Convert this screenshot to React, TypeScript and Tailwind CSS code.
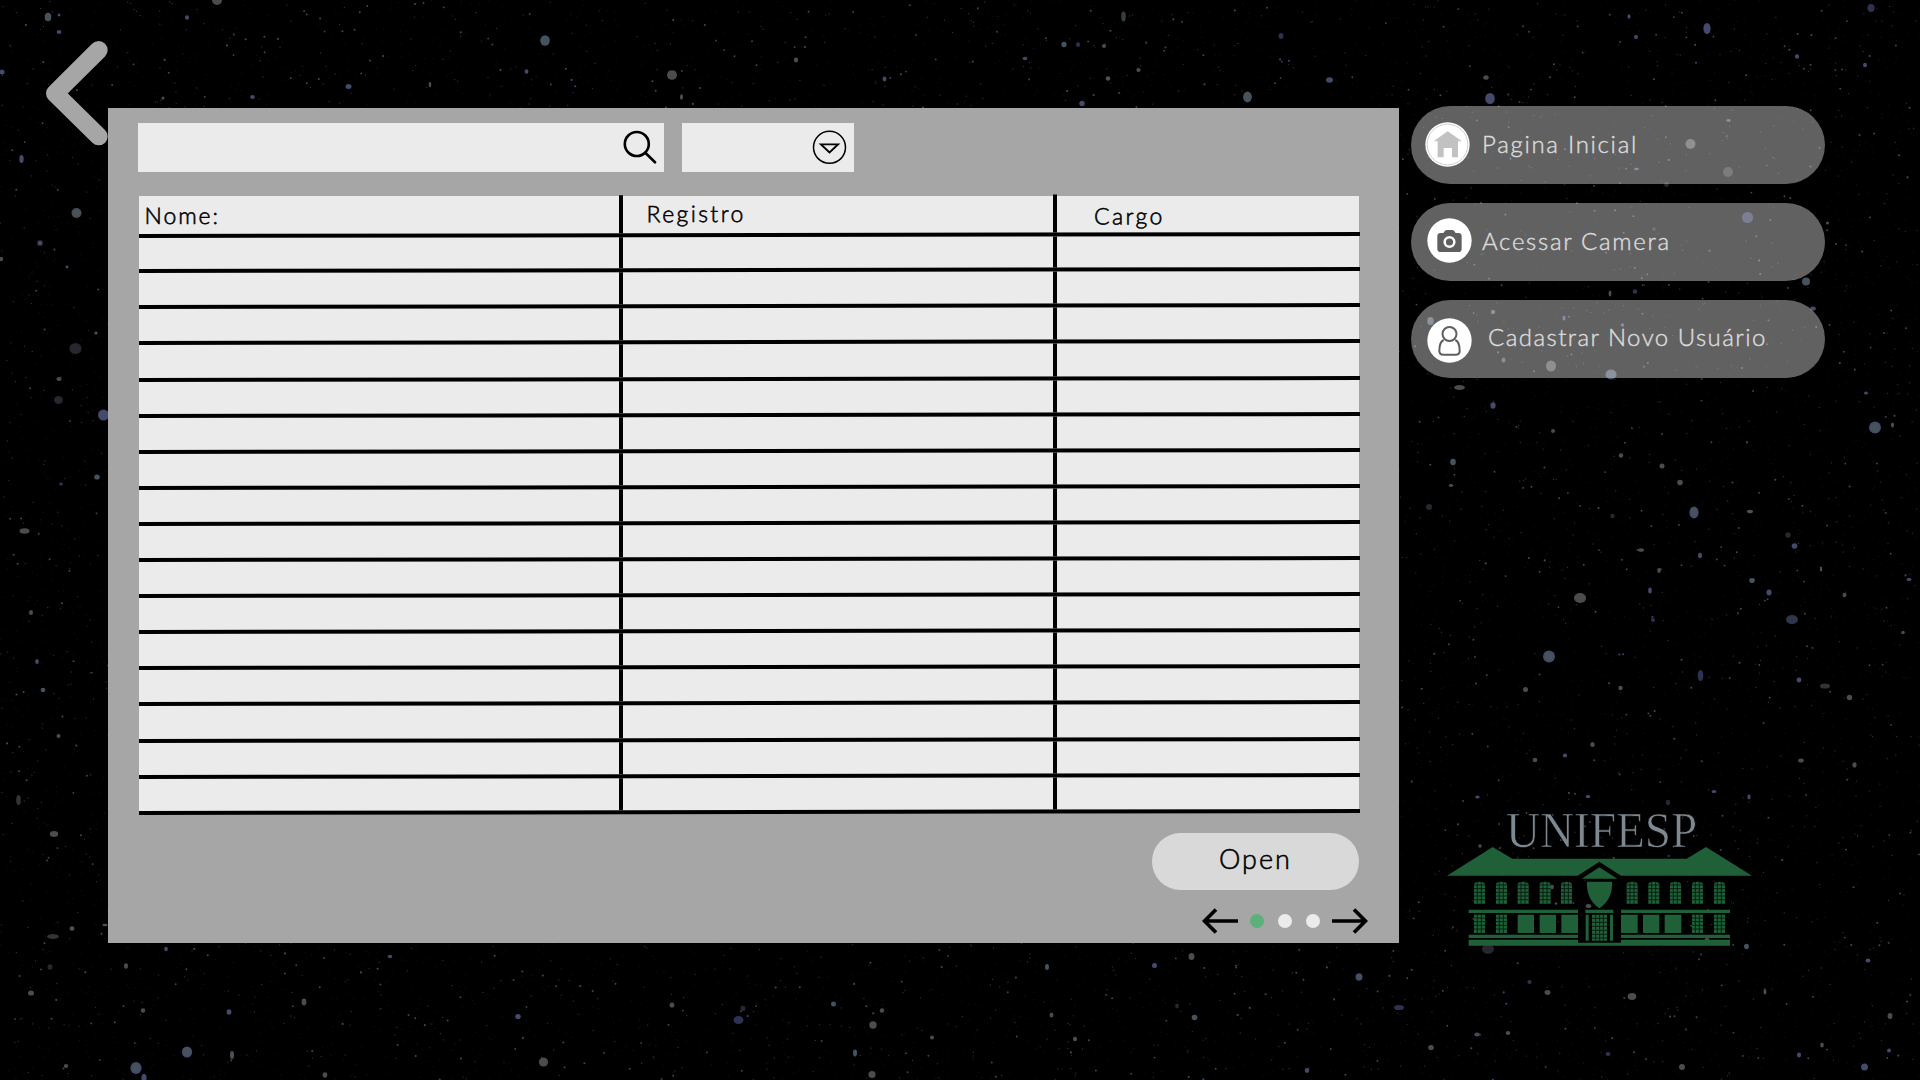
import type { ReactNode } from 'react';

type Star = [number, number, number, number, string];

const W = '#4c4b4d';
const B = '#434a6c';
const T = '#46525c';
const D = '#26272f';
const N = '#2d3152';

// x, y, horizontal radius, vertical radius, colour
const STARS: Star[] = [
  [48, 17, 3.3, 4.3, T], [59, 32, 2.3, 2.1, B], [59, 15, 1.4, 1.4, B], [187, 17.5, 2, 2.3, B], [217, 0, 5, 5, W],
  [2, 72, 2.5, 2.5, B], [252.5, 97, 2.3, 2.1, B], [348.5, 86.5, 3, 2.5, B], [430, 84.5, 1.3, 2.8, W], [21.5, 159, 2.2, 4, B],
  [76.5, 213, 5, 5, W], [76.5, 213, 3.4, 3.4, T], [40, 243, 3.1, 3.1, D], [40, 243, 2, 2, T], [1, 259, 2.2, 2.2, W], [163, 98, 1.5, 1.5, W],
  [1459.5, 387.5, 5.3, 2.6, W], [1493, 405.5, 2.6, 3.2, B], [1553, 431, 2, 2, W], [1453, 462, 2.8, 3.2, T], [1451, 485.5, 2.2, 1.4, W],
  [1429, 507, 3, 3, D], [1621, 455.5, 2.2, 2.2, W], [1662, 466, 2.5, 2.5, W], [1680, 482.5, 2.8, 2.8, W], [1694, 512.5, 4.6, 6, B],
  [1694, 512.5, 3.2, 4.4, T], [1875, 427.5, 6, 6, B], [1875, 427.5, 4.3, 4.3, T], [1892.5, 425, 1.6, 2.5, W], [1866, 393, 2, 1.6, B],
  [1750, 511.5, 3, 1.8, T], [1788, 535, 2.8, 2.8, D], [1794.5, 546, 2.8, 2.8, B], [1700, 555.5, 2, 2.8, B], [1752, 580.5, 2.8, 2.4, T],
  [1769, 592.5, 2.5, 3, B], [1792, 619.5, 6, 4.5, '#2c3849'], [1580, 598, 6, 5, W], [1549, 656.5, 6, 6, B], [1549, 656.5, 4.3, 4.3, T],
  [1641, 550, 3, 1.8, W], [1659, 570.5, 1.8, 2.4, W], [1650, 590.5, 1.8, 3, B], [1700.5, 675.5, 2.8, 5.6, N], [1825, 686, 5, 2.6, '#2c3438'],
  [1849.5, 697.5, 2.7, 2.7, W], [1799, 680, 2.4, 2.4, B], [1525.5, 689.5, 2.5, 2.5, W], [1620.5, 688, 2.2, 2.2, W], [1592.5, 744.5, 2.2, 2.6, W],
  [1535, 760, 2.3, 2.3, W], [1565, 755.5, 2.1, 2.1, B], [1801, 760.5, 2.8, 2.1, W], [1854.5, 765, 2.1, 2.7, W], [1844.5, 595, 2, 2.3, W],
  [1653, 620, 2, 2, N], [1612.5, 516, 2.2, 2.2, D], [1909, 579.5, 2.6, 1.4, B], [1903, 632.5, 1.8, 1.8, W], [1821, 569, 1.2, 2.8, W],
  [136, 1068, 5.6, 6, B], [136, 1068, 4, 4.6, T], [187, 1052, 5.2, 5.6, B], [187, 1052, 3.8, 4.2, T], [144, 1078, 2.6, 4, B],
  [232, 1055, 2, 4, T], [229, 1012, 2.4, 2.8, B], [304, 1002, 2.4, 3.4, W], [31, 993, 3, 2.6, W], [126, 966, 2, 2.8, W],
  [143, 1010.5, 2.2, 2.2, W], [66, 1066, 2.2, 2, W], [50, 967, 2.5, 2.8, D], [166, 949, 1.8, 2.2, B], [325, 1075, 2.3, 2.7, W],
  [518, 1016.5, 2.7, 2.6, B], [543.5, 1062, 4.6, 4.6, W], [672, 1005, 2.4, 2.6, W], [738.5, 1020, 5, 4, N], [743, 1008.5, 2.5, 2.8, D],
  [833.5, 1004, 2.5, 2.5, T], [873, 1025, 3.7, 3.7, W], [855, 1053, 2, 3.4, T], [872, 1074.5, 3.6, 3.6, W], [882, 1010.5, 2.2, 2.2, W],
  [932, 1037.5, 2, 2, W], [390, 956.5, 2.2, 1.7, B], [1047, 967, 2, 3, T], [1191.5, 956.5, 3, 3.6, W], [1154.5, 965.5, 2.5, 2.5, B],
  [1359, 977, 3.5, 3.8, B], [1359, 977, 2.2, 2.6, T], [1051.5, 1015, 2, 2.6, W], [1194.5, 1017.5, 2.8, 2.8, T], [1177, 1006, 1.8, 2.4, D],
  [1399, 1007.5, 5, 2.6, N], [1307, 1070.5, 2.2, 2.4, B], [1431, 1047.5, 2.8, 2.6, W], [1477, 1034.5, 2.7, 2, B], [1508, 1033, 2.3, 2, W],
  [1488, 949, 6, 5, D], [1547.5, 992.5, 2.9, 2.4, W], [1632, 996.5, 4.3, 3.4, W], [1529.5, 982, 2.1, 2.1, N], [1682, 1067, 3, 3, W],
  [1608, 1054, 2.5, 2.1, N], [1746.5, 946.5, 2.4, 2.8, T], [1868, 960.5, 2.4, 2, B], [1890, 1016, 2.4, 3, W], [1822, 1045, 1.8, 2.6, W],
  [1799, 1055, 2.1, 2.4, B], [1864.5, 1067, 3.5, 3.5, B], [1889, 1050.5, 2, 2, B], [1765, 992, 1.4, 2.4, T], [1075, 1039, 2, 2.3, T],
  [75.5, 348.5, 6, 5.6, D], [58.5, 400, 4.5, 4, D], [59, 379, 2.6, 2, W], [103.5, 415, 5.5, 5.5, B], [97, 477, 2.8, 2.6, T],
  [24.5, 531, 5, 2.8, W], [61, 484, 2, 1.6, N], [31, 612.5, 2, 2.6, W], [37, 661.5, 1.8, 2.6, B], [43, 690, 2.3, 2.2, T],
  [58.5, 736, 2, 2, W], [18.5, 800, 2.3, 5, '#343434'], [54, 834, 4.2, 3, W], [72, 928.5, 2.4, 2.2, T], [53, 936.5, 5.8, 2.6, '#343434'],
  [105, 925, 2.6, 1.3, W], [67, 267, 1.4, 1.4, B], [96, 333, 1.6, 1.5, T],
  [545, 40.5, 4.8, 5.2, T], [672, 75, 5, 4.8, W], [1123.5, 16.5, 2.3, 5, '#353f42'], [1707, 28.5, 3.6, 5.6, B], [1871, 8, 3.6, 4, N],
  [1247.5, 97, 4.4, 5.4, T], [1490, 98.5, 4.8, 5.6, B], [1281, 36, 2.4, 3, N], [1064, 44.5, 2.6, 2.8, T], [1078, 44.5, 2, 2.6, N],
  [1104, 46, 2, 2.1, W], [1108, 78.5, 2.3, 2.3, T], [1138.5, 70, 2.2, 2, W], [1082, 103.5, 2.7, 2.8, B], [1329.5, 80, 3.4, 2.7, B],
  [1486, 77.5, 2.7, 2.2, W], [1797, 56.5, 2.1, 2.3, B], [1865, 65, 2, 2.3, B], [796, 60, 2.2, 2.4, W], [884.5, 79, 2, 2.4, B],
  [681.5, 97, 1.6, 2.8, W], [1025, 58.5, 2.3, 1.8, B], [526.5, 71.5, 1.9, 2.3, B], [1629, 16.5, 1.5, 2.3, B], [1636, 37, 2, 2.1, B],
  [1690.5, 144, 5, 5, '#4c4c4c'], [1728, 172, 5, 5, '#2c2c2c'], [1747.5, 217.5, 5.6, 5.6, N], [1806, 281.5, 4, 4, T], [1551, 366, 5, 5.6, W],
  [1611, 374.5, 5.6, 5, B], [1611, 374.5, 4, 3.8, T], [1430.5, 321, 3.3, 4, T], [1493, 312, 2.2, 2.2, T], [1503.5, 360, 2, 2.6, W],
  [1564, 318, 1.5, 2.6, B], [1635, 291.5, 2.3, 2.3, N], [1610, 293.5, 1.4, 3, W], [1827.5, 223, 1.5, 1.5, W], [1728.5, 120.5, 2.3, 1.4, W],
  [1666.5, 184.5, 2.4, 2.4, D], [1813, 308.5, 2.8, 2, B], [1636.5, 169, 2.4, 1.3, B], [1654, 229, 1.8, 1.8, D], [1622.5, 325, 1.7, 1.7, B],
  [1477.5, 797, 2.2, 1.6, B], [1588, 796.5, 2.4, 1.5, B], [1668, 802.5, 2.2, 2.8, D], [1749, 797, 1.6, 2.4, B], [1714, 791.5, 2.4, 1.6, B],
  [1480, 846, 1.7, 1.7, W], [1552, 887, 2, 2.2, W], [1588.5, 906, 2.8, 2, W], [1556, 903.5, 1.2, 1.2, W], [1707, 939.5, 2.5, 1.4, W],
];

const random = (seed: number) => () => {
  seed = (seed * 1664525 + 1013904223) >>> 0;
  return seed / 4294967296;
};

const dust = (seed: number, count: number) => {
  const next = random(seed);
  let d = '';
  for (let i = 0; i < count; i++) d += `M${(next() * 1920).toFixed(1)} ${(next() * 1080).toFixed(1)}h.01`;
  return d;
};

const DUST = [
  { d: dust(7, 9000), width: 1.1, color: '#161616' },
  { d: dust(21, 3200), width: 1.3, color: '#333336' },
  { d: dust(43, 800), width: 1.9, color: '#454549' },
  { d: dust(91, 380), width: 2.1, color: '#3a4468' },
];

function StarField() {
  return (
    <svg className="absolute inset-0" width="1920" height="1080" viewBox="0 0 1920 1080">
      {DUST.map((l) => (
        <path key={l.color} d={l.d} stroke={l.color} strokeWidth={l.width} strokeLinecap="round" fill="none" />
      ))}
      <g style={{ filter: 'blur(0.7px)' }}>
        {STARS.map(([x, y, rx, ry, c], i) => (
          <ellipse key={i} cx={x} cy={y} rx={rx} ry={ry} fill={c} />
        ))}
      </g>
    </svg>
  );
}

function HomeIcon() {
  return (
    <svg className="h-[45px] w-[45px]" viewBox="0 0 135 135">
      <circle cx="67.5" cy="67.5" r="66.5" fill="#fff" />
      <circle cx="67.5" cy="67.5" r="61" fill="none" stroke="#c4c4c4" strokeWidth="2.5" />
      <path d="M68 28 109 56v2H99v48H81V78H56v28H38V58H28v-2z" fill="#c2c2c2" />
    </svg>
  );
}

function CameraIcon() {
  return (
    <svg className="h-[45px] w-[45px]" viewBox="0 0 135 135">
      <circle cx="67.5" cy="67.5" r="66.5" fill="#fff" />
      <path d="M41 45h8l5-7q2-2 5-2h17q3 0 5 2l5 7h8q10 0 10 10v37q0 10-10 10H41q-10 0-10-10V55q0-10 10-10z" fill="#5f5f5f" />
      <circle cx="67.5" cy="72" r="14.5" fill="#5f5f5f" stroke="#fff" strokeWidth="7.5" />
    </svg>
  );
}

function UserIcon() {
  return (
    <svg className="h-[45px] w-[45px]" viewBox="0 0 135 135">
      <circle cx="67.5" cy="67.5" r="66.5" fill="#fff" />
      <g fill="none" stroke="#5f5f5f" strokeWidth="6">
        <circle cx="67.5" cy="48" r="21" />
        <path d="M50 66Q37 72 37 98q0 12 12 12h37q12 0 12-12 0-26-13-32" />
      </g>
    </svg>
  );
}

function MenuItem({ icon, children, className }: { icon: ReactNode; children: ReactNode; className: string }) {
  return (
    <button className={`flex h-[78px] w-[414px] items-center rounded-full bg-white/[0.38] text-left text-2xl leading-7 font-light text-[#dcdcdc] ${className}`}>
      {icon}
      {children}
    </button>
  );
}

function Window({ x, y, h, arch }: { x: number; y: number; h: number; arch?: boolean }) {
  const lines = Array.from({ length: Math.floor(h / 10) }, (_, i) => y + 10 + i * 11).filter((v) => v < y + h - 3);
  return (
    <g>
      <path d={arch ? `M${x} ${y + h}V${y + 7}q3-7 16-7t17 7v${h - 7}z` : `M${x} ${y}h33v${h}h-33z`} fill="#1f6038" />
      <path d={`M${x + 10} ${y}v${h}M${x + 22} ${y}v${h}` + lines.map((v) => `M${x} ${v}h33`).join('')} stroke="#04120a" strokeWidth="2.4" />
    </g>
  );
}

function UnifespLogo() {
  return (
    <svg className="h-[142px] w-[310px] overflow-visible" viewBox="45 55 930 426">
      <text x="228" y="173" fontFamily="Liberation Serif, serif" fontSize="154" fill="#7d8890" stroke="#000" strokeWidth="2.2" textLength="574" lengthAdjust="spacingAndGlyphs">UNIFESP</text>
      <g fill="#1f6038">
        <path d="M51 258 188 172 247 207H770L828 172 966 258H573L508 216 443 258z" />
        <path d="M455 267 508 233 562 267z" />
        <path d="M471 276h75q3 52-38 80-40-28-37-80z" />
        <path d="M116 360h328v10H116zM466 360h84v10h-84zM573 360h327v10H573zM116 435h328v10H116zM573 435h327v10H573z" />
        <path d="M116 450h328v9h129v-9h327v18H116z" />
        <path d="M263 375h49v55h-49zM329 375h49v55h-49zM394 375h50v55h-50zM573 375h50v55h-50zM639 375h49v55h-49zM704 375h50v55h-50z" />
        <path d="M467 375h9v78h-9zM540 375h9v78h-9zM486 375h45v78h-45z" />
      </g>
      <path d="M497 375v78M509 375v78M520 375v78M486 386h45M486 398h45M486 410h45M486 422h45M486 434h45M486 445h45" stroke="#04120a" strokeWidth="2.4" />
      {[132, 198, 263, 329, 393, 590, 655, 720, 786, 852].map((x) => <Window key={x} x={x} y={276} h={66} arch />)}
      {[132, 198, 786, 852].map((x) => <Window key={x} x={x} y={375} h={55} />)}
    </svg>
  );
}

const ROWS = Array.from({ length: 15 }, (_, i) => i);
const COLUMNS = 'grid grid-cols-[480px_433.5px_1fr] border-b-4 border-black';
const CELL = 'border-l-4 border-black';

function RecordTable() {
  return (
    <div className="mt-6 ml-[30.5px] h-[616px] w-[1220.5px] bg-[#ebebeb]">
      <div className="origin-top-left -skew-y-[0.094deg] text-[23px] leading-7 font-light text-black [-webkit-text-stroke:0.55px_currentColor]">
        <div className={`${COLUMNS} h-[41.7px]`}>
          <div className="pt-[5px] pl-[5.5px] tracking-[1.9px]">Nome:</div>
          <div className={`${CELL} pt-1 pl-[23.5px] tracking-[2.4px]`}>Registro</div>
          <div className={`${CELL} pt-[7px] pl-[37.5px] tracking-[2.4px]`}>Cargo</div>
        </div>
        <div className={`${COLUMNS} h-[35.6px]`}><div /><div className={CELL} /><div className={CELL} /></div>
        {ROWS.map((r) => (
          <div key={r} className={`${COLUMNS} h-[36.1px]`}><div /><div className={CELL} /><div className={CELL} /></div>
        ))}
      </div>
    </div>
  );
}

function Arrow({ flip }: { flip?: boolean }) {
  return (
    <svg className={flip ? 'h-[26px] w-[36px] rotate-180' : 'h-[26px] w-[36px]'} viewBox="0 0 36 26" fill="none" stroke="#000" strokeWidth="3.7">
      <path d="M14 1.5 2.5 13 14 24.5M2.5 13H36" />
    </svg>
  );
}

export default function App() {
  return (
    <main className="relative flex h-[1080px] w-[1920px] overflow-hidden bg-black font-['Lato',sans-serif] [-webkit-text-stroke:0.4px_currentColor]">
      <StarField />
      <button className="relative h-[160px] w-[108px] shrink-0">
        <svg width="108" height="160" viewBox="0 0 324 480" fill="none">
          <path d="M296 150 165 280 296 409" stroke="#a6a6a6" strokeWidth="54" strokeLinecap="round" strokeLinejoin="round" />
        </svg>
      </button>

      <section className="relative mt-[108px] flex h-[835px] w-[1291px] shrink-0 flex-col bg-[#a6a6a6]">
        <div className="mt-[14.5px] ml-[30px] flex gap-[17.5px]">
          <div className="flex h-[49px] w-[526px] items-center justify-end bg-[#ebebeb] pr-[7px]">
            <svg className="h-[34px] w-[34px]" viewBox="0 0 34 34" fill="none" stroke="#000" strokeWidth="2.6" strokeLinecap="round">
              <circle cx="13.8" cy="14" r="12" />
              <path d="M22.3 22.8 32 32.3" />
            </svg>
          </div>
          <div className="flex h-[49px] w-[172px] items-center justify-end bg-[#ebebeb] pr-[6.5px]">
            <svg className="h-[35px] w-[35px]" viewBox="0 0 35 35" fill="none" stroke="#000" strokeWidth="1.5">
              <circle cx="17.5" cy="17.3" r="16" />
              <path d="M9 14.4H26L17.5 22.4z" strokeWidth="1.9" />
            </svg>
          </div>
        </div>

        <RecordTable />

        <button className="mt-[21px] ml-[1044px] flex h-[57px] w-[207px] items-center justify-center rounded-full bg-[#d9d9d9] pb-1 text-[27px] leading-8 font-light tracking-[2px] text-black [-webkit-text-stroke:0.55px_currentColor]">
          Open
        </button>

        <div className="mt-[18px] ml-[1094px] flex items-center">
          <Arrow />
          <div className="mr-3 ml-3 flex gap-[14px]">
            <span className="h-[14px] w-[14px] rounded-full bg-[#5cb079]" />
            <span className="h-[14px] w-[14px] rounded-full bg-[#ebebeb]" />
            <span className="h-[14px] w-[14px] rounded-full bg-[#ebebeb]" />
          </div>
          <Arrow flip />
        </div>
      </section>

      <aside className="relative ml-3 flex flex-col pt-[105.5px]">
        <nav className="flex flex-col gap-[19.2px]">
          <MenuItem className="pl-3.5 tracking-[1.7px]" icon={<HomeIcon />}>
            <span className="ml-3 -mt-0.5">Pagina Inicial</span>
          </MenuItem>
          <MenuItem className="pl-4 tracking-[1.7px]" icon={<div className="-mt-[3px]"><CameraIcon /></div>}>
            <span className="ml-2.5 -mt-0.5">Acessar Camera</span>
          </MenuItem>
          <MenuItem className="pl-4 tracking-[1.45px]" icon={<div className="mt-[3px]"><UserIcon /></div>}>
            <span className="ml-4 -mt-[3px]">Cadastrar Novo Usuário</span>
          </MenuItem>
        </nav>
        <div className="mt-[430.5px] ml-[34px]">
          <UnifespLogo />
        </div>
      </aside>
    </main>
  );
}
